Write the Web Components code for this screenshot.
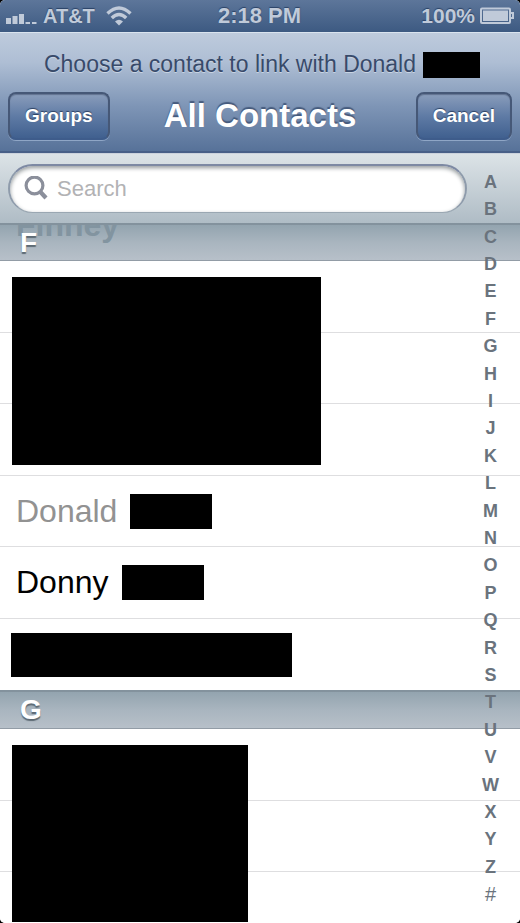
<!DOCTYPE html>
<html lang="en">
<head>
<meta charset="utf-8">
<meta name="viewport" content="width=device-width, initial-scale=1">
<title>All Contacts</title>
<style>
  html { background: #000; }
  body { margin: 0; font-family: "Liberation Sans", Arial, sans-serif; }
</style>
</head>
<body>
<contacts-app></contacts-app>

<script>
const define = (name, html) => {
  const template = document.createElement('template');
  template.innerHTML = html;
  customElements.define(name, class extends HTMLElement {
    constructor() {
      super();
      this.attachShadow({ mode: 'open' }).append(template.content.cloneNode(true));
    }
  });
};

/* Solid block that hides a private name; sized by --w and --h. */
define('private-block', `
  <style>
    :host { display: block; flex: none; width: var(--w); height: var(--h); background: #000; }
  </style>`);

define('status-bar', `
  <style>
    :host {
      display: grid; grid-template-columns: 1fr auto 1fr; align-items: center;
      height: 32px; padding: 0 6px 0 5px; box-sizing: border-box;
      background: linear-gradient(#5d769a, #3d5a82);
      color: #c0cad9; font-weight: bold; font-size: 20px; line-height: 32px;
      text-shadow: 0 -1px 1px #2b4266;
    }
    .side { display: flex; align-items: center; }
    .right { justify-content: flex-end; gap: 5px; font-size: 21px; }
    .time { font-size: 22px; }
    svg { display: block; fill: #c0cad9; }
    .wifi { margin-left: 11px; }
    .bars { margin-right: 6px; }
  </style>
  <div class="side">
    <svg class="bars" width="32" height="32" aria-label="Signal"><path d="M1 18h5v6H1zM7.500 16h5v8h-5zM14 14h5v10h-5zM20.500 22h4.500v2h-4.500zM27 22h4.500v2H27z"/></svg>
    <span>AT&amp;T</span>
    <svg class="wifi" width="26" height="32" viewBox="0 0 26 32" aria-label="Wi-Fi">
      <g fill="none" stroke="#c0cad9" stroke-width="3.400"><path d="M1.500 13.500Q13 2.500 24.500 13.500"/><path d="M5.800 18Q13 11 20.200 18"/></g>
      <path d="M9 21.500Q13 18 17 21.500L13 25.500Z"/>
    </svg>
  </div>
  <span class="time">2:18 PM</span>
  <div class="side right">
    <span>100%</span>
    <svg width="34" height="32" viewBox="0 0 34 32" aria-label="Battery">
      <rect x="1" y="8.500" width="29" height="14.500" rx="1" fill="none" stroke="#c0cad9" stroke-width="2"/>
      <rect x="3" y="10.500" width="25" height="10.500"/>
      <path d="M31 12h3v7h-3v-2h1v-3h-1z"/>
    </svg>
  </div>`);

define('bar-button', `
  <style>
    :host { display: block; }
    :host([slot="right"]) { justify-self: end; }
    :host([slot="left"]) { justify-self: start; }
    button {
      display: block; height: 48px; padding: 0 15px; margin: 0;
      border: 2px solid #465877; border-bottom-color: #3e5c8b; border-radius: 8px;
      background: linear-gradient(#8a9dbb, #5f7ba5 50%, #40608f);
      box-shadow: 0 1px 0 #8fa6c6, inset 0 1px 1px #61728f;
      color: #fff; font: bold 19px/44px "Liberation Sans", Arial, sans-serif;
      text-shadow: 0 -1px 1px #2c4062;
    }
  </style>
  <button type="button"><slot></slot></button>`);

define('nav-header', `
  <style>
    :host {
      display: block; height: 121px; box-sizing: border-box; padding: 0 8px;
      border-top: 1px solid #dae4ef; border-bottom: 2px solid #485f87;
      background: linear-gradient(#becbdd, #aebed4 25%, #7e95b6 62%, #577299);
    }
    .prompt {
      display: flex; align-items: center; justify-content: center; gap: 7px; height: 59px; padding: 4px 0 0 4px; box-sizing: border-box;
      margin: 0; color: #384a6a; font-size: 23px; white-space: nowrap; text-shadow: 0 1px 0 #c8d4e3;
    }
    .row { display: grid; grid-template-columns: 1fr auto 1fr; align-items: center; }
    h1 { margin: 0; color: #fff; font-size: 33px; line-height: 48px; text-shadow: 0 -2px 1px #465b7d; }
  </style>
  <p class="prompt"><slot name="prompt"></slot></p>
  <div class="row"><slot name="left"></slot><h1><slot></slot></h1><slot name="right"></slot></div>`);

define('search-bar', `
  <style>
    :host {
      display: block; height: 70px; box-sizing: border-box; padding: 10px 53px 0 8px;
      border-top: 1px solid #cbd2dc; background: linear-gradient(#dce3e7, #afbcc5);
    }
    label {
      display: flex; align-items: center; gap: 9px; height: 49px; padding: 0 16px 0 14px; box-sizing: border-box;
      border: 2px solid #8e9bab; border-top-color: #7d89a3; border-bottom: 1px solid #9aa7b2; border-radius: 25px;
      background: #fff; box-shadow: inset 0 2px 4px #949a9c;
    }
    svg { flex: none; }
    input {
      flex: 1; min-width: 0; border: 0; padding: 0; outline: 0; background: none; appearance: none;
      font: 22px/28px "Liberation Sans", Arial, sans-serif; color: #000;
    }
    input::placeholder { color: #b2b2b4; opacity: 1; }
  </style>
  <label>
    <svg width="24" height="26" viewBox="0 0 24 26" fill="none" stroke="#8b8f9b" aria-hidden="true">
      <circle cx="10.500" cy="9.500" r="8.400" stroke-width="3.200"/><path d="M16 15.500l6 6.500" stroke-width="4.200"/>
    </svg>
    <input type="search" placeholder="Search" aria-label="Search">
  </label>`);

define('section-header', `
  <style>
    :host {
      display: block; position: relative; overflow: hidden; height: 39px; box-sizing: border-box; padding-left: 20px;
      border-top: 2px solid #83929d; border-bottom: 1px solid #929ca6;
      background: linear-gradient(#93a4af, #a9b5bf 50%, #b7c0c9);
    }
    :host([pinned]) { height: 38px; }
    h2 { position: relative; margin: 0; font-size: 28px; line-height: 36px; color: #fff; text-shadow: 0 2px 1px #5d6a74; }
    ::slotted(span) {
      position: absolute; left: 16px; bottom: 17px; font-weight: bold; font-size: 32px; line-height: 36px; color: #8294a0;
    }
  </style>
  <slot name="under"></slot>
  <h2><slot></slot></h2>`);

define('contact-group', `
  <style>
    :host { display: block; position: relative; background: #fff; }
    ::slotted(private-block) { position: absolute; left: 12px; top: 16px; }
  </style>
  <div role="list"><slot></slot></div>
  <slot name="cover"></slot>`);

define('contact-row', `
  <style>
    :host {
      display: flex; align-items: center; gap: 13px; height: 71px; box-sizing: border-box; padding-left: 16px;
      border-bottom: 1px solid #dedee0; font-size: 32px; color: #000;
    }
    :host(:nth-of-type(odd)) { height: 72px; }
    :host(:last-of-type) { border-bottom: 0; }
    :host([linked]) { color: #929292; }
    :host([hidden-name]) { padding-left: 11px; }
  </style>
  <slot></slot>`);

customElements.define('alpha-index', class extends HTMLElement {
  constructor() {
    super();
    this.attachShadow({ mode: 'open' }).innerHTML = `
      <style>
        :host { display: block; }
        nav { display: flex; flex-direction: column; height: 100%; }
        a {
          flex: 1; display: flex; align-items: center; justify-content: center;
          color: #6a737d; font-weight: bold; font-size: 18px; line-height: 20px; text-decoration: none;
        }
        a:last-child { font-weight: normal; font-size: 20px; }
      </style>
      <nav aria-label="Index">${[...'ABCDEFGHIJKLMNOPQRSTUVWXYZ#'].map(c => `<a href="#${c}">${c}</a>`).join('')}</nav>`;
  }
});

define('contacts-app', `
  <style>
    :host {
      display: flex; flex-direction: column; position: relative; height: 100vh; overflow: hidden;
      border-radius: 5px; background: #fff;
    }
    status-bar, nav-header, search-bar { flex: none; }
    main { flex: 1; min-height: 0; overflow: hidden; }
    alpha-index { position: absolute; right: 0; top: 168px; bottom: 15px; width: 59px; }
  </style>
  <status-bar></status-bar>
  <nav-header>
    <span slot="prompt">Choose a contact to link with Donald</span>
    <private-block slot="prompt" style="--w:57px;--h:26px"></private-block>
    <bar-button slot="left">Groups</bar-button>
    All Contacts
    <bar-button slot="right">Cancel</bar-button>
  </nav-header>
  <search-bar></search-bar>
  <main>
    <section-header pinned><span slot="under">Finney</span>F</section-header>
    <contact-group>
      <contact-row role="listitem"></contact-row>
      <contact-row role="listitem"></contact-row>
      <contact-row role="listitem"></contact-row>
      <contact-row role="listitem" linked><span>Donald</span><private-block style="--w:82px;--h:35px"></private-block></contact-row>
      <contact-row role="listitem"><span>Donny</span><private-block style="--w:82px;--h:35px"></private-block></contact-row>
      <contact-row role="listitem" hidden-name><private-block style="--w:281px;--h:44px"></private-block></contact-row>
      <private-block slot="cover" style="--w:309px;--h:188px"></private-block>
    </contact-group>
    <section-header>G</section-header>
    <contact-group>
      <contact-row role="listitem"></contact-row>
      <contact-row role="listitem"></contact-row>
      <contact-row role="listitem"></contact-row>
      <private-block slot="cover" style="--w:236px;--h:177px"></private-block>
    </contact-group>
  </main>
  <alpha-index></alpha-index>`);
</script>
</body>
</html>
